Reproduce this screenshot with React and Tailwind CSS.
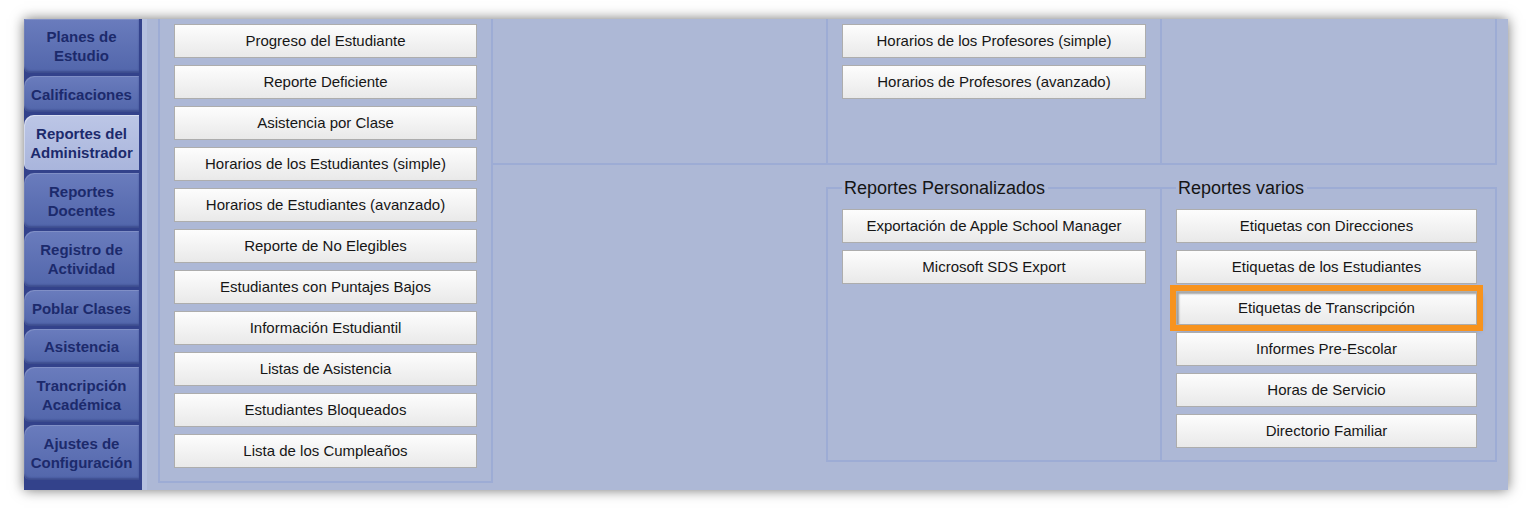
import React from "react";

const tabs = [
  { label: ["Planes de", "Estudio"], h: "h-[54px]", first: true },
  { label: ["Calificaciones"], h: "h-[36px]" },
  { label: ["Reportes del", "Administrador"], h: "h-[55px]", active: true },
  { label: ["Reportes", "Docentes"], h: "h-[55px]" },
  { label: ["Registro de", "Actividad"], h: "h-[56px]" },
  { label: ["Poblar Clases"], h: "h-[36px]" },
  { label: ["Asistencia"], h: "h-[35px]" },
  { label: ["Trancripción", "Académica"], h: "h-[55px]" },
  { label: ["Ajustes de", "Configuración"], h: "h-[55px]" },
];

const studentReports = [
  "Progreso del Estudiante",
  "Reporte Deficiente",
  "Asistencia por Clase",
  "Horarios de los Estudiantes (simple)",
  "Horarios de Estudiantes (avanzado)",
  "Reporte de No Elegibles",
  "Estudiantes con Puntajes Bajos",
  "Información Estudiantil",
  "Listas de Asistencia",
  "Estudiantes Bloqueados",
  "Lista de los Cumpleaños",
];

const teacherReports = [
  "Horarios de los Profesores (simple)",
  "Horarios de Profesores (avanzado)",
];

const customReports = ["Exportación de Apple School Manager", "Microsoft SDS Export"];

const miscReports = [
  "Etiquetas con Direcciones",
  "Etiquetas de los Estudiantes",
  "Etiquetas de Transcripción",
  "Informes Pre-Escolar",
  "Horas de Servicio",
  "Directorio Familiar",
];

const Tab = ({ tab }) => (
  <div
    className={`${tab.h} flex flex-col items-center justify-center text-[15px] leading-[19px] font-bold text-[#1c2a6c] ${
      tab.first ? "rounded-bl-[6px]" : "rounded-tl-[10px] rounded-bl-[6px]"
    } ${
      tab.active
        ? "bg-linear-to-b from-[#bcc6e6] to-[#a9b5dc] shadow-[inset_1px_1px_0_rgba(255,255,255,0.4)]"
        : "bg-linear-to-b from-[#6a7cbd] to-[#5266ab] shadow-[inset_0_-2px_2px_rgba(20,30,90,0.35),inset_1px_1px_0_rgba(255,255,255,0.15)]"
    }`}
  >
    {tab.label.map((line) => (
      <span key={line}>{line}</span>
    ))}
  </div>
);

const ReportButton = ({ label, highlight }) => (
  <div
    className={`h-[34px] shrink-0 flex items-center justify-center border border-[#adadad] bg-linear-to-b from-[#fdfdfd] to-[#e9e9e9] text-[15px] text-[#161616] ${
      highlight
        ? "outline-6 outline-[#f7931e] shadow-[inset_2px_2px_2px_rgba(0,0,0,0.35),3px_4px_6px_rgba(0,0,0,0.35)]"
        : ""
    }`}
  >
    {label}
  </div>
);

export default function App() {
  return (
    <div className="w-[1532px] h-[514px] bg-white overflow-hidden font-['Liberation_Sans',Arial,sans-serif]">
      <div className="ml-[24px] mt-[19px] w-[1484px] h-[471px] flex shadow-[0_0_12px_rgba(0,0,0,0.55)]">
        {/* sidebar */}
        <div className="w-[118px] shrink-0 h-full bg-[#33428b] pr-[3px] flex flex-col gap-[3px]">
          {tabs.map((tab) => (
            <Tab key={tab.label.join(" ")} tab={tab} />
          ))}
        </div>

        {/* content */}
        <div className="flex-1 min-w-0 h-full bg-[#adb8d6] pl-[11px] pr-[11px] flex items-start border-l-[5px] border-[#b5c0df]">
          <div className="w-[335px] shrink-0 border-x-2 border-b-2 border-[#9dacd5] px-[14px] pt-[5px] pb-[13px] flex flex-col gap-[7px]">
            {studentReports.map((r) => (
              <ReportButton key={r} label={r} />
            ))}
          </div>

          <div className="w-[1004px] shrink-0 flex flex-col">
            <div className="grid grid-cols-[335px_334px_335px] h-[146px]">
              <div className="border-r-2 border-b-2 border-[#9dacd5]" />
              <div className="border-r-2 border-b-2 border-[#9dacd5] px-[14px] pt-[5px] flex flex-col gap-[7px]">
                {teacherReports.map((r) => (
                  <ReportButton key={r} label={r} />
                ))}
              </div>
              <div className="border-r-2 border-b-2 border-[#9dacd5]" />
            </div>

            <div className="flex mt-[13px]">
              <div className="w-[333px]" />
              <fieldset className="w-[336px] border-2 border-[#9dacd5] px-[14px] pt-[11px] pb-[12px] flex flex-col gap-[7px]">
                <legend className="pl-[2px] pr-[3px] text-[18px] leading-[20px] text-[#151515]">
                  Reportes Personalizados
                </legend>
                {customReports.map((r) => (
                  <ReportButton key={r} label={r} />
                ))}
              </fieldset>
              <fieldset className="w-[335px] border-2 border-l-0 border-[#9dacd5] pl-[14px] pr-[18px] pt-[11px] pb-[12px] flex flex-col gap-[7px]">
                <legend className="pl-[2px] pr-[3px] text-[18px] leading-[20px] text-[#151515]">
                  Reportes varios
                </legend>
                {miscReports.map((r) => (
                  <ReportButton key={r} label={r} highlight={r === "Etiquetas de Transcripción"} />
                ))}
              </fieldset>
            </div>
          </div>
        </div>
      </div>
    </div>
  );
}
